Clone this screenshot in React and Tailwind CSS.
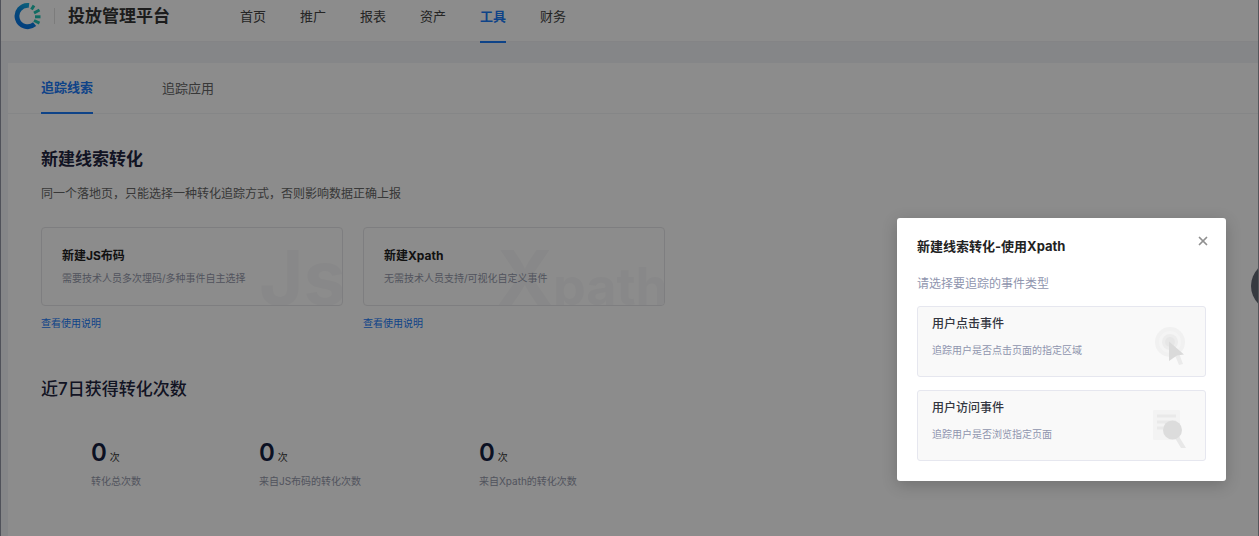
import { useState } from 'react'
import { X } from 'lucide-react'

const menus = ['首页', '推广', '报表', '资产', '工具', '财务']

const tabs = ['追踪线索', '追踪应用']

const stats = [
  { label: '转化总次数', value: 0, width: 'w-[168px]' },
  { label: '来自JS布码的转化次数', value: 0, width: 'w-[220px]' },
  { label: '来自Xpath的转化次数', value: 0, width: 'w-[168px]' },
]

function Logo() {
  return (
    <svg width="28" height="28" viewBox="0 0 28 28" fill="none" aria-hidden="true">
      <defs>
        <linearGradient id="ring" x1="6" y1="26" x2="18" y2="2" gradientUnits="userSpaceOnUse">
          <stop offset="0" stopColor="#0672e6" />
          <stop offset="0.55" stopColor="#0a84e0" />
          <stop offset="1" stopColor="#16b4e0" />
        </linearGradient>
      </defs>
      <path d="M16 3.400A10.700 10.700 0 1 0 21.600 22.200" stroke="url(#ring)" strokeWidth="4.800" />
      <g stroke="#1fc4b4" strokeWidth="3">
        <path d="M18.500 7.500l2.500-4" />
        <path d="M21 11l5.500-3" />
        <path d="M22 14.800h5.500" />
        <path d="M21 18.500l5.500 2.600" />
      </g>
    </svg>
  )
}

function ClickIcon() {
  return (
    <svg width="34" height="40" viewBox="0 0 34 40" aria-hidden="true">
      <circle cx="17" cy="17" r="15" fill="#f1f1f1" />
      <circle cx="17" cy="17" r="11" fill="#f4f4f4" />
      <circle cx="17" cy="17" r="8" fill="#ececec" />
      <circle cx="17" cy="17" r="5" fill="#e6e6e6" />
      <path d="M21 28l4-2.500 5 13.500-4 1z" fill="#ebebeb" />
      <path d="M16 16.500l15 13-7 1-8 5.500z" fill="#dadada" />
    </svg>
  )
}

function VisitIcon() {
  return (
    <svg width="34" height="40" viewBox="0 0 34 40" aria-hidden="true">
      <rect y="1" width="27" height="30" rx="1" fill="#f3f3f3" />
      <path d="M4 7h19M4 13h19M4 19h12" stroke="#e9e9e9" strokeWidth="3" />
      <path d="M22 29l4-1.500 7 11.500h-5z" fill="#e8e8e8" />
      <circle cx="19.500" cy="21" r="9.500" fill="#dcdcdc" />
    </svg>
  )
}

const events = [
  { title: '用户点击事件', desc: '追踪用户是否点击页面的指定区域', Icon: ClickIcon },
  { title: '用户访问事件', desc: '追踪用户是否浏览指定页面', Icon: VisitIcon },
]

function MethodCard({ title, desc, children }) {
  return (
    <div className="w-[302px]">
      <button
        type="button"
        className="relative block h-[79px] w-full overflow-hidden rounded border border-[#e6e6e9] px-5 text-left"
      >
        <span
          aria-hidden="true"
          className="absolute -right-1 bottom-0 flex h-[56px] items-baseline font-bold leading-[56px] text-[#f8f8f9]"
        >
          {children}
        </span>
        <span className="relative block text-[12px] font-bold leading-[18px] text-[#222]">{title}</span>
        <span className="relative mt-1 block text-[10px] leading-[18px] text-[#9599ab]">{desc}</span>
      </button>
      <a href="#" className="mt-2 inline-block text-[10px] leading-[18px] text-[#1a7af8]">
        查看使用说明
      </a>
    </div>
  )
}

function App() {
  const [open, setOpen] = useState(true)
  const [tab, setTab] = useState('追踪线索')

  return (
    <div
      lang="zh-CN"
      className="relative min-h-screen overflow-hidden border-l border-[#50525a] bg-[#f2f4f8] font-['Inter','Noto_Sans_CJK_SC',sans-serif]"
    >
      <header className="flex h-[42px] border-b border-[#f0f1f4] bg-white pl-3">
        <div className="flex h-8 items-center">
          <Logo />
          <span className="ml-[13px] h-4 w-px bg-[#e2e2e2]" />
          <h1 className="ml-[13px] text-[17px] font-bold leading-8 text-[#333]">投放管理平台</h1>
        </div>
        <nav className="ml-[70px] flex gap-[34px]">
          {menus.map((menu) => (
            <a
              key={menu}
              href="#"
              className={
                menu === '工具'
                  ? 'h-[43px] border-b-2 border-[#1a7af8] text-[13px] font-bold leading-8 text-[#1a7af8]'
                  : 'h-[43px] text-[13px] leading-8 text-[#444]'
              }
            >
              {menu}
            </a>
          ))}
        </nav>
      </header>

      <main className="ml-[7px] mt-[21px] min-h-[473px] bg-white">
        <div role="tablist" className="flex h-[51px] gap-[69px] border-b border-[#f3f4f6] pl-[33px]">
          {tabs.map((item) => (
            <button
              key={item}
              type="button"
              role="tab"
              aria-selected={tab === item}
              onClick={() => setTab(item)}
              className={
                tab === item
                  ? 'h-[51px] border-b-2 border-[#1a7af8] text-[13px] font-bold text-[#1a7af8]'
                  : 'h-[51px] text-[13px] text-[#666]'
              }
            >
              {item}
            </button>
          ))}
        </div>

        <div className="px-[33px] pt-[31px]">
          <h2 className="text-[17px] font-bold leading-7 text-[#1f2540]">新建线索转化</h2>
          <p className="mt-[11px] text-[12px] leading-5 text-[#666]">
            同一个落地页，只能选择一种转化追踪方式，否则影响数据正确上报
          </p>

          <div className="mt-[23px] flex gap-5">
            <MethodCard title="新建JS布码" desc="需要技术人员多次埋码/多种事件自主选择">
              <span className="text-[76px]">Js</span>
            </MethodCard>
            <MethodCard title="新建Xpath" desc="无需技术人员支持/可视化自定义事件">
              <span className="text-[76px]">X</span>
              <span className="text-[52px]">path</span>
            </MethodCard>
          </div>

          <h2 className="mt-[42px] text-[17px] font-medium leading-7 text-[#1f2540]">近7日获得转化次数</h2>

          <div className="mt-9 flex pl-[50px]">
            {stats.map((stat) => (
              <div key={stat.label} className={stat.width}>
                <p className="flex h-7 items-baseline gap-[3px] text-[10px] leading-4 text-[#333]">
                  <span className="text-[24px] font-semibold leading-7 text-[#15203f]">{stat.value}</span>
                  次
                </p>
                <p className="mt-1 text-[10px] leading-5 text-[#9599ab]">{stat.label}</p>
              </div>
            ))}
          </div>
        </div>
      </main>

      {open && (
        <>
          <div className="absolute inset-0 bg-black/45" />
          <section
            role="dialog"
            aria-labelledby="dialog-title"
            className="absolute right-[33px] top-[218px] w-[329px] rounded-[3px] bg-white px-5 pb-5 pt-4 shadow-[0_4px_16px_rgba(0,0,0,0.2)]"
          >
            <div className="flex items-start justify-between">
              <h3 id="dialog-title" className="text-[13px] font-bold leading-6 text-[#222]">
                新建线索转化-使用Xpath
              </h3>
              <button type="button" aria-label="关闭" onClick={() => setOpen(false)} className="-mr-1 text-[#909090]">
                <X size={14} strokeWidth={3} />
              </button>
            </div>
            <p className="mt-4 text-[12px] leading-5 text-[#8f95ae]">请选择要追踪的事件类型</p>
            <div className="mt-3 flex flex-col gap-[13px]">
              {events.map(({ title, desc, Icon }) => (
                <button
                  key={title}
                  type="button"
                  className="flex h-[71px] items-start justify-between rounded-[3px] border border-[#e6e7ef] bg-[#f9f9f9] pl-[14px] pr-[18px] text-left"
                >
                  <span className="pt-2">
                    <span className="block text-[12px] font-medium leading-[18px] text-[#333640]">{title}</span>
                    <span className="mt-2 block text-[10px] leading-[18px] text-[#8f95ae]">{desc}</span>
                  </span>
                  <span className="pt-[18px]">
                    <Icon />
                  </span>
                </button>
              ))}
            </div>
          </section>
        </>
      )}

      <button
        type="button"
        aria-label="在线客服"
        className="absolute -right-[42px] top-[261px] h-[50px] w-[50px] rounded-full bg-[#373a40]"
      />
      <div className="absolute inset-y-0 right-0 w-px bg-[#55565b]" />
    </div>
  )
}

export default App
